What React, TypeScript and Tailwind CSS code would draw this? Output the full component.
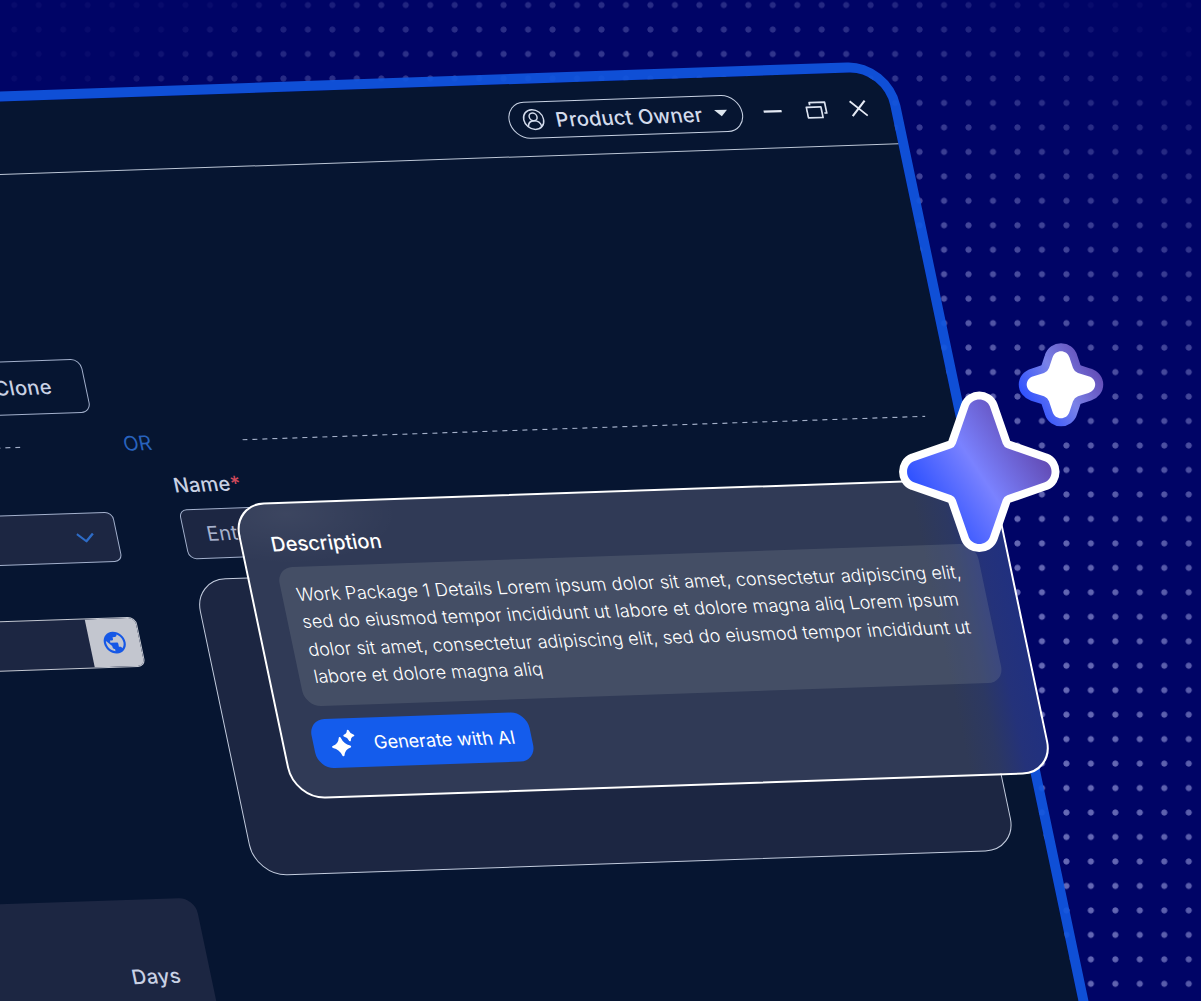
import React from "react";
import { MdPublic } from "react-icons/md";

const DOTS =
  "absolute inset-0 [background-image:radial-gradient(circle_at_12.24px_12.24px,#c4c8ff_2.7px,transparent_3.4px)] [background-size:24.475px_24.475px] [background-position:2px_-7.2px] [mask-image:radial-gradient(950px_900px_at_650px_800px,rgba(0,0,0,.62)_0,rgba(0,0,0,.5)_50%,rgba(0,0,0,.41)_64%,rgba(0,0,0,.26)_83%,rgba(0,0,0,.16)_93%,rgba(0,0,0,.04)_100%)]";

function UserIcon() {
  return (
    <svg className="size-[22px]" viewBox="0 0 22 22" fill="none" stroke="#d3dbec" strokeWidth="1.5">
      <circle cx="11" cy="11" r="9.9" />
      <circle cx="11" cy="8.3" r="3.9" />
      <path d="M4.3 18.2c.5-3.4 3-5.9 6.7-5.9s6.2 2.5 6.7 5.9" />
    </svg>
  );
}

function WindowControls() {
  return (
    <div className="ml-[20px] flex items-center">
      <svg className="w-[20px] h-[20px]" viewBox="0 0 20 20" stroke="#e4e9f4" strokeWidth="2.2">
        <path d="M1 10h18" />
      </svg>
      <svg className="ml-[22.5px] w-[22px] h-[20px]" viewBox="0 0 22 20" fill="none" stroke="#dce3f0" strokeWidth="1.7" strokeLinejoin="round">
        <path d="M1.2 7.2h14.6v10.6H1.2z" />
        <path d="M5 5.2V2.6h15.4v10.8h-2.4" />
      </svg>
      <svg className="ml-[22.5px] w-[18px] h-[18px]" viewBox="0 0 18 18" stroke="#e4e9f4" strokeWidth="2">
        <path d="M1.5 1.5l15 15M16.5 1.5l-15 15" />
      </svg>
    </div>
  );
}

function TitleBar() {
  return (
    <div className="h-[73px] flex items-center border-b border-[#bcc6d6] pl-[789px]">
      <div className="w-[234px] h-[37px] shrink-0 rounded-full border border-[#c6d0e2] flex items-center pl-[12.5px]">
        <UserIcon />
        <span className="ml-[11.5px] mt-px w-[147px] text-[20px] leading-none font-[450] tracking-[0.22px] text-[#d3dbec] whitespace-nowrap">
          Product Owner
        </span>
        <svg className="ml-[11.5px] w-[13px] h-[8px]" viewBox="0 0 12 7" fill="#dde6ee">
          <path d="M0 .5h12L6 6.5z" />
        </svg>
      </div>
      <WindowControls />
    </div>
  );
}

function LeftColumn() {
  return (
    <div className="w-[315px] shrink-0 flex flex-col">
      <div className="mt-[55px] h-[50px] w-[314px] rounded-[8px] border border-[#a3b0cc] bg-[#1c2642] flex items-center justify-end pr-[22px]">
        <svg className="w-[18px] h-[10px]" viewBox="0 0 18 10" fill="none" stroke="#2d6bc6" strokeWidth="2.2">
          <path d="M1 1l8 7.5L17 1" />
        </svg>
      </div>
      <div className="mt-[55px] h-[50px] w-[315px] rounded-[8px] border border-[#c3c7d1] bg-[#1c2642] flex overflow-hidden">
        <div className="ml-auto w-[50px] bg-[#c3c6cf] flex items-center justify-center">
          <MdPublic className="size-[26px] text-[#1658e6]" />
        </div>
      </div>
      <div className="mt-[231px] h-[300px] rounded-[16px] bg-[#1c2642] flex justify-end pt-[65px] pr-[30px]">
        <span className="text-[20px] leading-6 font-[450] tracking-[0.3px] text-[#c9d1e4]">Days</span>
      </div>
    </div>
  );
}

function RightColumn() {
  return (
    <div className="ml-[65px] w-[761.5px] shrink-0 flex flex-col">
      <label className="mt-[19px] h-6 text-[20px] leading-6 font-[450] tracking-[0.2px] text-[#c9d1e4]">
        Name<span className="text-[#cf4a5c]">*</span>
      </label>
      <div className="mt-[12px] h-[49.5px] rounded-[8px] border border-[#a3b0cc] bg-[#1c2642] flex items-center pl-[22px] text-[20px] tracking-[0.3px] text-[#a7b2cd]">
        Enter
      </div>
      <div className="mt-[20px] h-[297px] rounded-[32px] border border-[#c3ccde] bg-[#1c2642]" />
    </div>
  );
}

const LINES = [
  "Work Package 1 Details Lorem ipsum dolor sit amet, consectetur adipiscing elit,",
  "sed do eiusmod tempor incididunt ut labore et dolore magna aliq Lorem ipsum",
  "dolor sit amet, consectetur adipiscing elit, sed do eiusmod tempor incididunt ut",
  "labore et dolore magna aliq",
];

function DescriptionCard() {
  return (
    <div className="absolute left-[434px] top-[406.5px] w-[761px] h-[296px] rounded-[32px] border-2 border-white [background:radial-gradient(110px_50px_at_50px_10px,rgba(255,255,255,.06),transparent),linear-gradient(90deg,#303a56_675px,#2c3862_705px,#24327a_732px,#203080_761px)] pl-[28.5px] pt-[26px] text-white flex flex-col items-start">
      <h2 className="text-[20px] leading-7 font-medium tracking-[0.05px]">Description</h2>
      <div className="mt-[9px] w-[699px] h-[139px] rounded-[16px] bg-[#94a0a4]/20 pl-[15px] pt-[14.5px] text-[18px] leading-[27.4px] font-light tracking-[0.055px]">
        {LINES.map((l) => (
          <p key={l} className="whitespace-nowrap">
            {l}
          </p>
        ))}
      </div>
      <button className="mt-[13.5px] w-[218px] h-[49px] rounded-[16px] bg-[#145cec] flex items-center pl-[17.5px] text-[18px]">
        <svg className="w-[26px] h-[27px]" viewBox="0 0 26 27" fill="#fff" stroke="#fff" strokeWidth="2" strokeLinejoin="round">
          <path d="M10.5 8.5Q12.3 15.2 19 17.2Q12.3 19.2 10.5 25.8Q8.7 19.2 2 17.2Q8.7 15.2 10.5 8.5z" />
          <path d="M20 1.5Q20.8 5.4 24.5 6.3Q20.8 7.2 20 11Q19.2 7.2 15.5 6.3Q19.2 5.4 20 1.5z" />
        </svg>
        <span className="ml-[17.5px] whitespace-nowrap">Generate with AI</span>
      </button>
    </div>
  );
}

function Stars() {
  const big =
    "M968.8 406.3C972.3 397.3 986.3 397.3 989.8 406.3L1002.8 443.8Q1004 447.1 1007.3 448.3L1044.8 461.3C1053.8 464.8 1053.8 478.8 1044.8 482.3L1007.3 495.3Q1004 496.5 1002.8 499.8L989.8 537.3C986.3 546.3 972.3 546.3 968.8 537.3L955.8 499.8Q954.6 496.5 951.3 495.3L913.8 482.3C904.8 478.8 904.8 464.8 913.8 461.3L951.3 448.3Q954.6 447.1 955.8 443.8Z";
  return (
    <svg className="absolute left-[890px] top-[330px] w-[230px] h-[232px]" viewBox="890 330 230 232">
      <defs>
        <linearGradient id="big" gradientUnits="userSpaceOnUse" x1="929" y1="505" x2="1029" y2="439">
          <stop offset="0" stopColor="#3153ff" />
          <stop offset=".5" stopColor="#7a82ff" />
          <stop offset="1" stopColor="#644fb9" />
        </linearGradient>
        <linearGradient id="small" gradientUnits="userSpaceOnUse" x1="1030" y1="405" x2="1092" y2="364">
          <stop offset="0" stopColor="#3153ff" />
          <stop offset=".5" stopColor="#7a82e8" />
          <stop offset="1" stopColor="#644fb9" />
        </linearGradient>
      </defs>
      <path d={big} stroke="#fff" strokeWidth="16" strokeLinejoin="round" />
      <path d={big} fill="url(#big)" />
      <path
        d="M1052.5 357.5C1055 349 1067 349 1069.5 357.5L1073 368Q1074.3 371.6 1078 373L1088.5 376.3C1097.5 379 1097.5 390 1088.5 393L1078 396.3Q1074.3 397.6 1073 401.3L1069.5 411.8C1067 420.5 1055 420.5 1052.5 411.8L1049 401.3Q1047.7 397.6 1044 396.3L1033.5 393C1024.5 390 1024.5 379 1033.5 376.3L1044 373Q1047.7 371.6 1049 368Z"
        fill="#fff"
        stroke="url(#small)"
        strokeWidth="16"
        strokeLinejoin="round"
        className="[paint-order:stroke]"
      />
    </svg>
  );
}

export default function App() {
  return (
    <div className="relative w-[1201px] h-[1001px] overflow-hidden bg-[#000466] font-['Inter',sans-serif]">
      <div className={DOTS} />
      <div className="relative w-[1191px] h-[1120px] origin-top-left [transform:matrix(1,-0.0343,0.2101,1,-300,101.8)] rounded-tr-[44px] border-[10px] border-[#1056e0]/92 bg-clip-padding bg-[#061531]">
        <TitleBar />
        <div className="pt-[185px]">
          <div className="w-[313.5px] h-[54px] rounded-[10px] border border-[#a3b0cc] flex items-center justify-end pr-[33px] text-[20px] font-[450] tracking-[0.3px] text-[#c9d1e4]">
            Clone
          </div>
        </div>
        <div className="mt-[20px] h-6 flex items-center">
          <svg className="w-[236px] h-[2px]" viewBox="0 0 236 2">
            <path d="M236 1H0" stroke="#a3afc8" strokeWidth="1.2" strokeDasharray="5 5" />
          </svg>
          <span className="w-[222px] pl-[12px] text-center text-[20px] leading-6 text-[#2862bd]">OR</span>
          <svg className="w-[683px] h-[2px]" viewBox="0 0 683 2">
            <path d="M0 1H683" stroke="#a3afc8" strokeWidth="1.2" strokeDasharray="5 5" />
          </svg>
        </div>
        <div className="flex">
          <LeftColumn />
          <RightColumn />
        </div>
        <DescriptionCard />
      </div>
      <Stars />
    </div>
  );
}
